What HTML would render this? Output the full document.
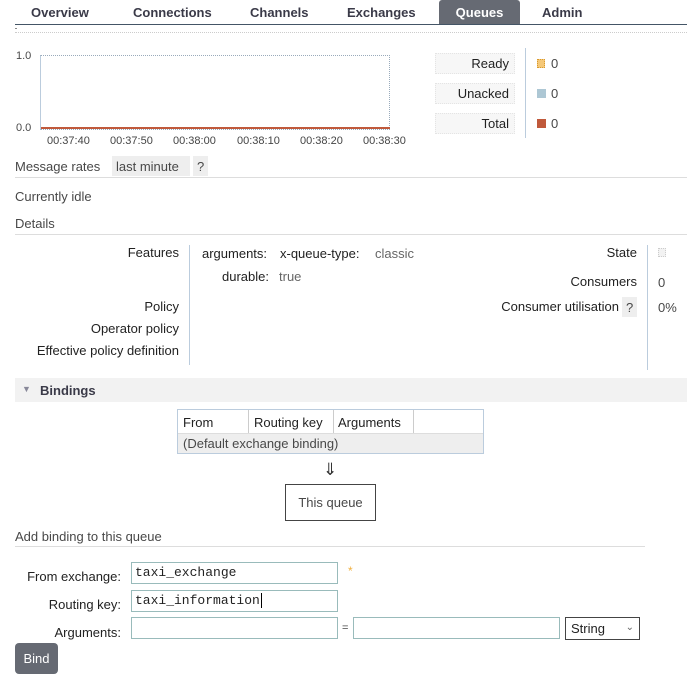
<!DOCTYPE html>
<html><head><style>
*{margin:0;padding:0;box-sizing:border-box}
body{width:687px;height:679px;background:#fff;font-family:"Liberation Sans",sans-serif;font-size:13px;color:#484848;position:relative;overflow:hidden}
.a{position:absolute;white-space:nowrap}
.r{text-align:right}
.tab{position:absolute;top:0;height:25px;line-height:25px;font-weight:bold;color:#3a3a48;font-size:13px}
.lg{position:absolute;left:435px;width:80px;height:21px;background:#f7f7f7;border:1px dotted #e4e4e4;text-align:right;padding-right:5px;line-height:20px;color:#222}
.inp{position:absolute;height:22px;border:1px solid #9bb;font-family:"Liberation Mono",monospace;font-size:13px;padding:2px 3px;color:#222}
.t{position:absolute;top:135px;font-size:11px;color:#444}
</style></head><body>
<div class="tab" style="left:31px">Overview</div>
<div class="tab" style="left:133px">Connections</div>
<div class="tab" style="left:250px">Channels</div>
<div class="tab" style="left:347px">Exchanges</div>
<div class="tab" style="left:439px;width:81px;background:#666a73;color:#fff;text-align:center;border-radius:3px 3px 0 0">Queues</div>
<div class="tab" style="left:542px">Admin</div>
<div class="a" style="left:15px;top:24px;width:672px;border-top:1px solid #456"></div>
<div class="a" style="left:15px;top:32px;width:672px;border-top:1px dotted #ccc"></div>
<div class="a" style="left:15px;top:28px;width:2px;border-top:1px solid #888"></div>

<div class="a" style="left:16px;top:50px;font-size:11px">1.0</div>
<div class="a" style="left:16px;top:122px;font-size:11px">0.0</div>
<div class="a" style="left:40px;top:55px;width:350px;height:75px;border:1px dotted #9ab;border-left:1px solid #bcd"></div>
<div class="a" style="left:41px;top:127px;width:349px;height:2px;background:#c0593b"></div>
<div class="t" style="left:47px">00:37:40</div>
<div class="t" style="left:110px">00:37:50</div>
<div class="t" style="left:173px">00:38:00</div>
<div class="t" style="left:237px">00:38:10</div>
<div class="t" style="left:300px">00:38:20</div>
<div class="t" style="left:363px">00:38:30</div>

<div class="lg" style="top:53px">Ready</div>
<div class="lg" style="top:83px">Unacked</div>
<div class="lg" style="top:113px">Total</div>
<div class="a" style="left:525px;top:48px;height:90px;border-left:1px solid #bcd"></div>
<div class="a" style="left:537px;top:59px;width:8px;height:9px;background:#f5c878;border:1px dotted #d89a30"></div>
<div class="a" style="left:537px;top:89px;width:9px;height:9px;background:#adc7d4"></div>
<div class="a" style="left:537px;top:119px;width:9px;height:9px;background:#c0593b"></div>
<div class="a" style="left:551px;top:56px">0</div>
<div class="a" style="left:551px;top:86px">0</div>
<div class="a" style="left:551px;top:116px">0</div>

<div class="a" style="left:15px;top:159px">Message rates</div>
<div class="a" style="left:112px;top:156px;width:78px;height:20px;background:#eee;padding:3px 4px">last minute</div>
<div class="a" style="left:193px;top:156px;width:15px;height:20px;background:#eee;padding:3px 4px">?</div>
<div class="a" style="left:15px;top:177px;width:672px;border-top:1px solid #ddd"></div>
<div class="a" style="left:15px;top:189px">Currently idle</div>
<div class="a" style="left:15px;top:216px">Details</div>
<div class="a" style="left:15px;top:234px;width:672px;border-top:1px solid #ddd"></div>

<div class="a r" style="right:508px;top:245px;color:#222">Features</div>
<div class="a r" style="right:508px;top:299px;color:#222">Policy</div>
<div class="a r" style="right:508px;top:321px;color:#222">Operator policy</div>
<div class="a r" style="right:508px;top:343px;color:#222">Effective policy definition</div>
<div class="a" style="left:189px;top:245px;height:120px;border-left:1px solid #bcd"></div>
<div class="a" style="left:202px;top:246px;color:#222">arguments:</div>
<div class="a" style="left:280px;top:246px;color:#222">x-queue-type:</div>
<div class="a" style="left:375px;top:246px;color:#666">classic</div>
<div class="a" style="left:222px;top:269px;color:#222">durable:</div>
<div class="a" style="left:279px;top:269px;color:#666">true</div>

<div class="a r" style="right:50px;top:245px;color:#222">State</div>
<div class="a r" style="right:50px;top:274px;color:#222">Consumers</div>
<div class="a r" style="right:68px;top:299px;color:#222">Consumer utilisation</div>
<div class="a" style="left:622px;top:297px;width:15px;height:20px;background:#eee;padding:3px 4px">?</div>
<div class="a" style="left:647px;top:245px;height:125px;border-left:1px solid #bcd"></div>
<div class="a" style="left:658px;top:248px;width:8px;height:9px;border:1px dotted #ccc;background:#f2f2f2"></div>
<div class="a" style="left:658px;top:275px">0</div>
<div class="a" style="left:658px;top:300px">0%</div>

<div class="a" style="left:15px;top:378px;width:672px;height:24px;background:#f2f2f2"></div>
<div class="a" style="left:22px;top:384px;font-size:9px;color:#889">▼</div>
<div class="a" style="left:40px;top:383px;font-weight:bold;color:#3a3a48">Bindings</div>

<div class="a" style="left:177px;top:409px;width:307px;height:45px;border:1px solid #bcd"></div>
<div class="a" style="left:178px;top:433px;width:305px;height:20px;background:#eee;border-top:1px solid #ddd"></div>
<div class="a" style="left:248px;top:410px;height:23px;border-left:1px solid #ccc"></div>
<div class="a" style="left:333px;top:410px;height:23px;border-left:1px solid #ccc"></div>
<div class="a" style="left:413px;top:410px;height:23px;border-left:1px solid #ccc"></div>
<div class="a" style="left:183px;top:415px;color:#222">From</div>
<div class="a" style="left:254px;top:415px;color:#222">Routing key</div>
<div class="a" style="left:338px;top:415px;color:#222">Arguments</div>
<div class="a" style="left:183px;top:436px">(Default exchange binding)</div>
<div class="a" style="left:323px;top:460px;font-size:17px;color:#333">⇓</div>
<div class="a" style="left:285px;top:484px;width:91px;height:37px;border:1px solid #444;text-align:center;line-height:36px">This queue</div>

<div class="a" style="left:15px;top:529px">Add binding to this queue</div>
<div class="a" style="left:15px;top:546px;width:630px;border-top:1px solid #ddd"></div>
<div class="a r" style="right:566px;top:569px;color:#222">From exchange:</div>
<div class="a r" style="right:566px;top:597px;color:#222">Routing key:</div>
<div class="a r" style="right:566px;top:625px;color:#222">Arguments:</div>
<div class="inp" style="left:131px;top:562px;width:207px">taxi_exchange</div>
<div class="inp" style="left:131px;top:590px;width:207px">taxi_information<span style="border-left:1px solid #000;margin-left:1px"></span></div>
<div class="inp" style="left:131px;top:617px;width:207px"></div>
<div class="a" style="left:342px;top:622px;font-size:11px">=</div>
<div class="inp" style="left:353px;top:617px;width:207px"></div>
<div class="a" style="left:348px;top:564px;color:#f0b040;font-size:12px">*</div>
<div class="a" style="left:565px;top:617px;width:75px;height:23px;border:1px solid #444;padding:3px 5px;color:#222">String<span style="position:absolute;right:5px;top:4px;font-size:10px;color:#666">⌄</span></div>
<div class="a" style="left:15px;top:643px;width:43px;height:31px;background:#666a73;color:#fff;border-radius:4px;text-align:center;line-height:31px">Bind</div>
</body></html>
